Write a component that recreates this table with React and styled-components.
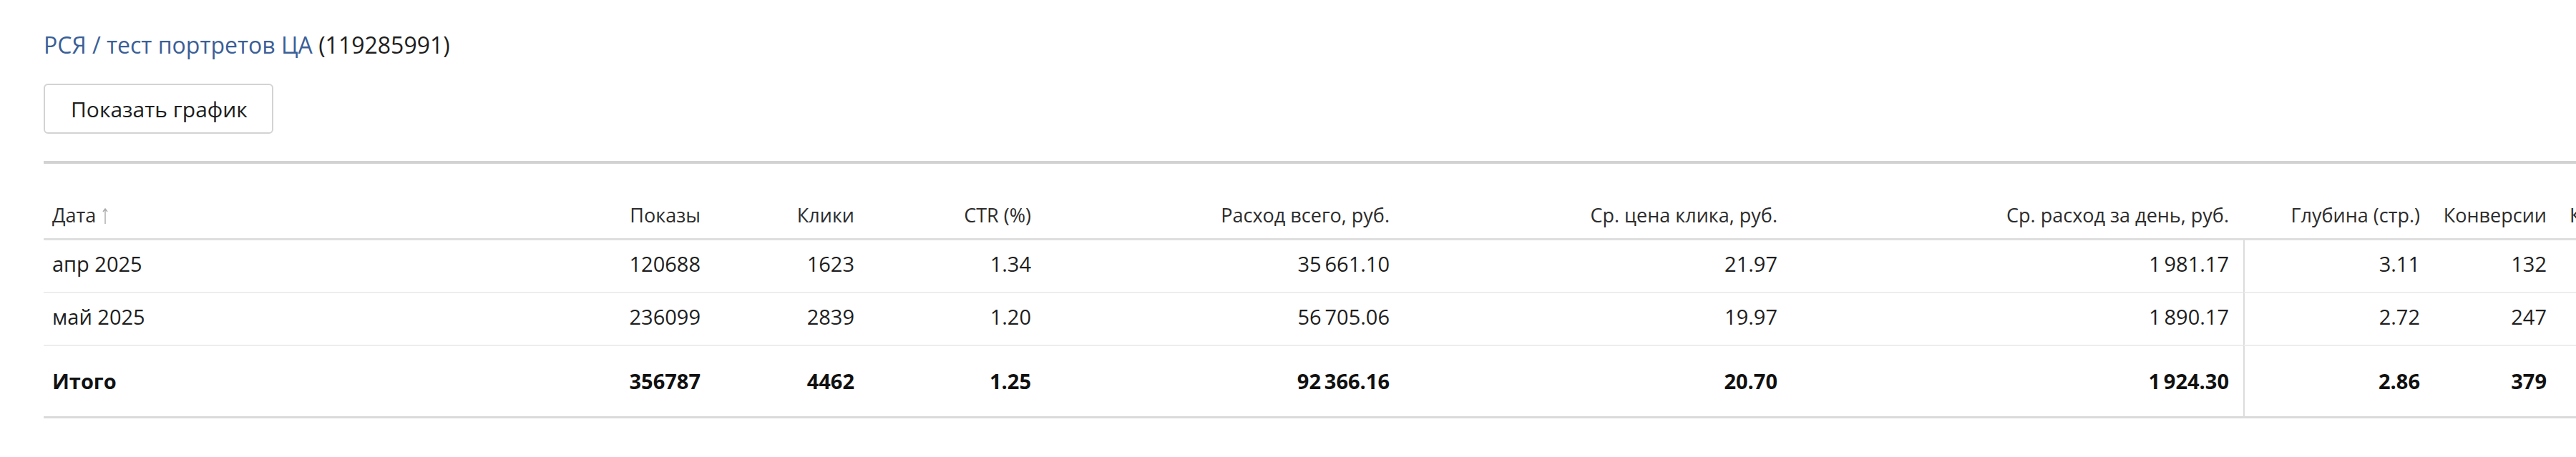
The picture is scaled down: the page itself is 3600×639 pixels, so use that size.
import React from "react";
import styled, { createGlobalStyle } from "styled-components";

const GlobalStyle = createGlobalStyle`
  html, body {
    margin: 0;
    background: #fff;
    overflow: hidden;
  }
  body {
    font-family: "Open Sans", "Noto Sans", sans-serif;
    color: #222;
  }
`

const Page = styled.div`
  padding: 43px 0 0 61px;
`

const Title = styled.div`
  font-size: 32px;
  line-height: 40px;
  color: #1e1e1e;
  white-space: nowrap;
`

const TitleLink = styled.a`
  color: #3b5f97;
  text-decoration: none;
`

const ChartButton = styled.button`
  display: block;
  margin-top: 34px;
  height: 70px;
  padding: 0 34px 0 36px;
  border: 2px solid #d3d3d3;
  border-radius: 6px;
  background: #fff;
  font-family: "Open Sans", "Noto Sans", sans-serif;
  font-size: 30px;
  color: #1e1e1e;
  cursor: pointer;
`

const Table = styled.table`
  margin-top: 38px;
  border-collapse: separate;
  border-spacing: 0;
  table-layout: fixed;
  width: 3918px;
  border-top: 4px solid #d2d2d2;
`

const Th = styled.th`
  font-size: 27px;
  line-height: 36px;
  font-weight: 400;
  color: #2c2c2c;
  padding: 54px 20px 14px 12px;
  text-align: ${p => (p.$left ? "left" : "right")};
  border-bottom: 3px solid #dedede;
  white-space: nowrap;
`

const Td = styled.td`
  font-size: 29px;
  line-height: 40px;
  font-weight: ${p => (p.$total ? 700 : 400)};
  color: ${p => (p.$total ? "#111" : "#1e1e1e")};
  padding: ${p => (p.$total ? "29px 20px 29px 12px" : "13px 20px 19px 12px")};
  text-align: ${p => (p.$left ? "left" : "right")};
  border-bottom: ${p => (p.$total ? "3px solid #dadada" : "2px solid #ededed")};
  border-left: ${p => (p.$divider ? "2px solid #dcdcdc" : "none")};
  white-space: nowrap;
`

const SortArrow = styled.svg`
  margin-left: 9px;
  vertical-align: -3px;
`

const columns = [
  { key: "date", title: "Дата", width: 758, left: true },
  { key: "shows", title: "Показы", width: 180 },
  { key: "clicks", title: "Клики", width: 215 },
  { key: "ctr", title: "CTR (%)", width: 247 },
  { key: "spend", title: "Расход всего, руб.", width: 501 },
  { key: "cpc", title: "Ср. цена клика, руб.", width: 542 },
  { key: "daily", title: "Ср. расход за день, руб.", width: 631 },
  { key: "depth", title: "Глубина (стр.)", width: 267, divider: true },
  { key: "conv", title: "Конверсии", width: 177 },
  { key: "convRate", title: "Конверсия (%)", width: 400, headLeft: true },
]

const rows = [
  { date: "апр 2025", shows: "120688", clicks: "1623", ctr: "1.34", spend: "35\u2009661.10", cpc: "21.97", daily: "1\u2009981.17", depth: "3.11", conv: "132", convRate: "8.13" },
  { date: "май 2025", shows: "236099", clicks: "2839", ctr: "1.20", spend: "56\u2009705.06", cpc: "19.97", daily: "1\u2009890.17", depth: "2.72", conv: "247", convRate: "8.70" },
]

const total = { date: "Итого", shows: "356787", clicks: "4462", ctr: "1.25", spend: "92\u2009366.16", cpc: "20.70", daily: "1\u2009924.30", depth: "2.86", conv: "379", convRate: "8.49" }

export default function App() {
  return (
    <Page>
      <GlobalStyle />
      <Title>
        <TitleLink href="#">РСЯ / тест портретов ЦА</TitleLink> (119285991)
      </Title>
      <ChartButton>Показать график</ChartButton>
      <Table>
        <colgroup>
          {columns.map(c => <col key={c.key} style={{ width: c.width }} />)}
        </colgroup>
        <thead>
          <tr>
            {columns.map(c => (
              <Th key={c.key} $left={c.left || c.headLeft}>
                {c.title}
                {c.key === "date" && (
                  <SortArrow width="8" height="24" viewBox="0 0 8 24">
                    <path d="M4 23V2M1 6l3-4 3 4" stroke="#aaa" strokeWidth="1.4" fill="none" />
                  </SortArrow>
                )}
              </Th>
            ))}
          </tr>
        </thead>
        <tbody>
          {rows.map((r, i) => (
            <tr key={i}>
              {columns.map(c => (
                <Td key={c.key} $left={c.left} $divider={c.divider}>{r[c.key]}</Td>
              ))}
            </tr>
          ))}
          <tr>
            {columns.map(c => (
              <Td key={c.key} $left={c.left} $divider={c.divider} $total>{total[c.key]}</Td>
            ))}
          </tr>
        </tbody>
      </Table>
    </Page>
  )
}
